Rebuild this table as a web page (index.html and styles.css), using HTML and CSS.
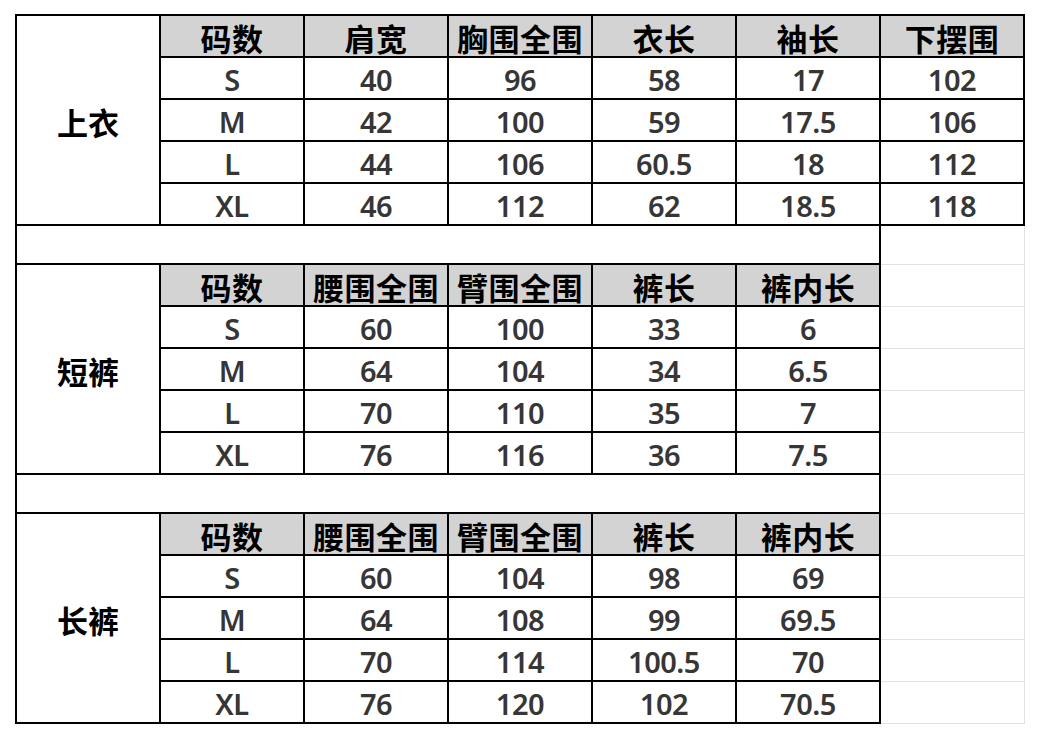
FILE: index.html
```html
<!DOCTYPE html>
<html lang="zh">
<head>
<meta charset="utf-8">
<title>尺码表</title>
<link rel="stylesheet" href="styles.css">
</head>
<body>
<div class="page">
<table class="chart">
  <colgroup>
    <col class="c"><col class="c"><col class="c"><col class="c"><col class="c"><col class="c"><col class="c"><col class="c">
  </colgroup>
  <tbody>
    <tr class="row">
      <td class="label" rowspan="5">上衣</td>
      <th>码数</th><th>肩宽</th><th>胸围全围</th><th>衣长</th><th>袖长</th><th>下摆围</th>
    </tr>
    <tr class="row"><td>S</td><td>40</td><td>96</td><td>58</td><td>17</td><td>102</td></tr>
    <tr class="row"><td>M</td><td>42</td><td>100</td><td>59</td><td>17.5</td><td>106</td></tr>
    <tr class="row"><td>L</td><td>44</td><td>106</td><td>60.5</td><td>18</td><td>112</td></tr>
    <tr class="row"><td>XL</td><td>46</td><td>112</td><td>62</td><td>18.5</td><td>118</td></tr>

    <tr class="gap"><td colspan="6" class="blank"></td><td class="grid"></td></tr>

    <tr class="row">
      <td class="label" rowspan="5">短裤</td>
      <th>码数</th><th>腰围全围</th><th>臂围全围</th><th>裤长</th><th>裤内长</th><td class="grid"></td>
    </tr>
    <tr class="row"><td>S</td><td>60</td><td>100</td><td>33</td><td>6</td><td class="grid"></td></tr>
    <tr class="row"><td>M</td><td>64</td><td>104</td><td>34</td><td>6.5</td><td class="grid"></td></tr>
    <tr class="row"><td>L</td><td>70</td><td>110</td><td>35</td><td>7</td><td class="grid"></td></tr>
    <tr class="row"><td>XL</td><td>76</td><td>116</td><td>36</td><td>7.5</td><td class="grid"></td></tr>

    <tr class="gap"><td colspan="6" class="blank"></td><td class="grid"></td></tr>

    <tr class="row">
      <td class="label" rowspan="5">长裤</td>
      <th>码数</th><th>腰围全围</th><th>臂围全围</th><th>裤长</th><th>裤内长</th><td class="grid"></td>
    </tr>
    <tr class="row"><td>S</td><td>60</td><td>104</td><td>98</td><td>69</td><td class="grid"></td></tr>
    <tr class="row"><td>M</td><td>64</td><td>108</td><td>99</td><td>69.5</td><td class="grid"></td></tr>
    <tr class="row"><td>L</td><td>70</td><td>114</td><td>100.5</td><td>70</td><td class="grid"></td></tr>
    <tr class="row"><td>XL</td><td>76</td><td>120</td><td>102</td><td>70.5</td><td class="grid"></td></tr>
  </tbody>
</table>
</div>
</body>
</html>
```
FILE: styles.css
```css
html, body {
  margin: 0;
  padding: 0;
  background: #ffffff;
}

.page {
  padding: 14px 0 0 15px;
}

.chart {
  border-collapse: collapse;
  table-layout: fixed;
  width: 1010px;
}

.chart .c {
  width: 144px;
}

.chart td,
.chart th {
  border: 2px solid #000;
  padding: 4px 0 0 0;
  text-align: center;
  vertical-align: middle;
  white-space: nowrap;
}

.row {
  height: 42px;
}

.gap {
  height: 39px;
}

.chart th {
  background: #d3d3d3;
  color: #000;
  font-family: "Noto Sans CJK SC", sans-serif;
  font-weight: 700;
  font-size: 31px;
  line-height: 34px;
  letter-spacing: 0.5px;
}

.chart td {
  color: #363636;
  font-family: "Noto Sans", "Noto Sans CJK SC", sans-serif;
  font-weight: 600;
  font-size: 29px;
  line-height: 34px;
  letter-spacing: -0.5px;
}

.chart td.label {
  color: #000;
  font-family: "Noto Sans CJK SC", sans-serif;
  font-weight: 700;
  font-size: 31px;
  letter-spacing: 0;
}

.chart td.grid,
.chart td.blank {
  padding: 0;
}

.chart td.grid {
  border: 1px solid #e2e2e2;
}
```
